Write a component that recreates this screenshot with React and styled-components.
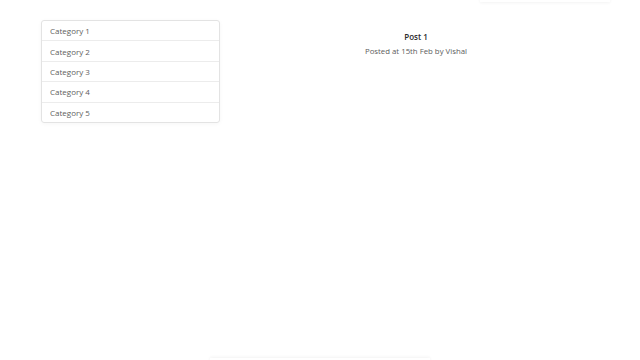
import React from "react";
import styled, { createGlobalStyle } from "styled-components";

const GlobalStyle = createGlobalStyle`
  html, body {
    margin: 0;
    padding: 0;
    background: #fff;
  }
  body {
    font-family: "Open Sans", "Liberation Sans", sans-serif;
  }
`;

const Page = styled.div`
  position: relative;
  width: 640px;
  height: 360px;
  overflow: hidden;
  display: flex;
  align-items: flex-start;
  padding: 20px 28px 0 41px;
  box-sizing: border-box;
`;

const CategoryList = styled.ul`
  list-style: none;
  margin: 0;
  padding: 0;
  width: 177px;
  flex-shrink: 0;
  border: 1px solid #e3e3e3;
  border-radius: 3px;
  box-shadow: 0 1px 4px rgba(0, 0, 0, 0.04);
`;

const CategoryItem = styled.li`
  height: 19.4px;
  display: flex;
  align-items: center;
  padding: 0 8px;
  font-size: 8px;
  color: #606060;
  border-top: ${(p) => (p.first ? "none" : "1px solid #ececec")};
`;

const Main = styled.div`
  flex: 1;
  display: flex;
  flex-direction: column;
  align-items: center;
  padding-top: 11px;
`;

const PostTitle = styled.div`
  font-size: 8px;
  font-weight: 600;
  color: #2a2a2a;
  line-height: 12px;
`;

const PostMeta = styled.div`
  font-size: 7.8px;
  color: #5c5c5c;
  line-height: 12px;
  margin-top: 2px;
`;

const TopShade = styled.div`
  position: absolute;
  top: -20px;
  left: 480px;
  width: 130px;
  height: 22px;
  box-shadow: 0 1px 3px rgba(0, 0, 0, 0.05);
`;

const BottomShade = styled.div`
  position: absolute;
  bottom: -20px;
  left: 210px;
  width: 220px;
  height: 22px;
  box-shadow: 0 -1px 3px rgba(0, 0, 0, 0.05);
`;

const categories = ["Category 1", "Category 2", "Category 3", "Category 4", "Category 5"];

function App() {
  return (
    <>
      <GlobalStyle />
      <Page>
        <TopShade />
        <CategoryList>
          {categories.map((name, i) => (
            <CategoryItem key={name} first={i === 0}>
              {name}
            </CategoryItem>
          ))}
        </CategoryList>
        <Main>
          <PostTitle>Post 1</PostTitle>
          <PostMeta>Posted at 15th Feb by Vishal</PostMeta>
        </Main>
        <BottomShade />
      </Page>
    </>
  );
}

export default App;
